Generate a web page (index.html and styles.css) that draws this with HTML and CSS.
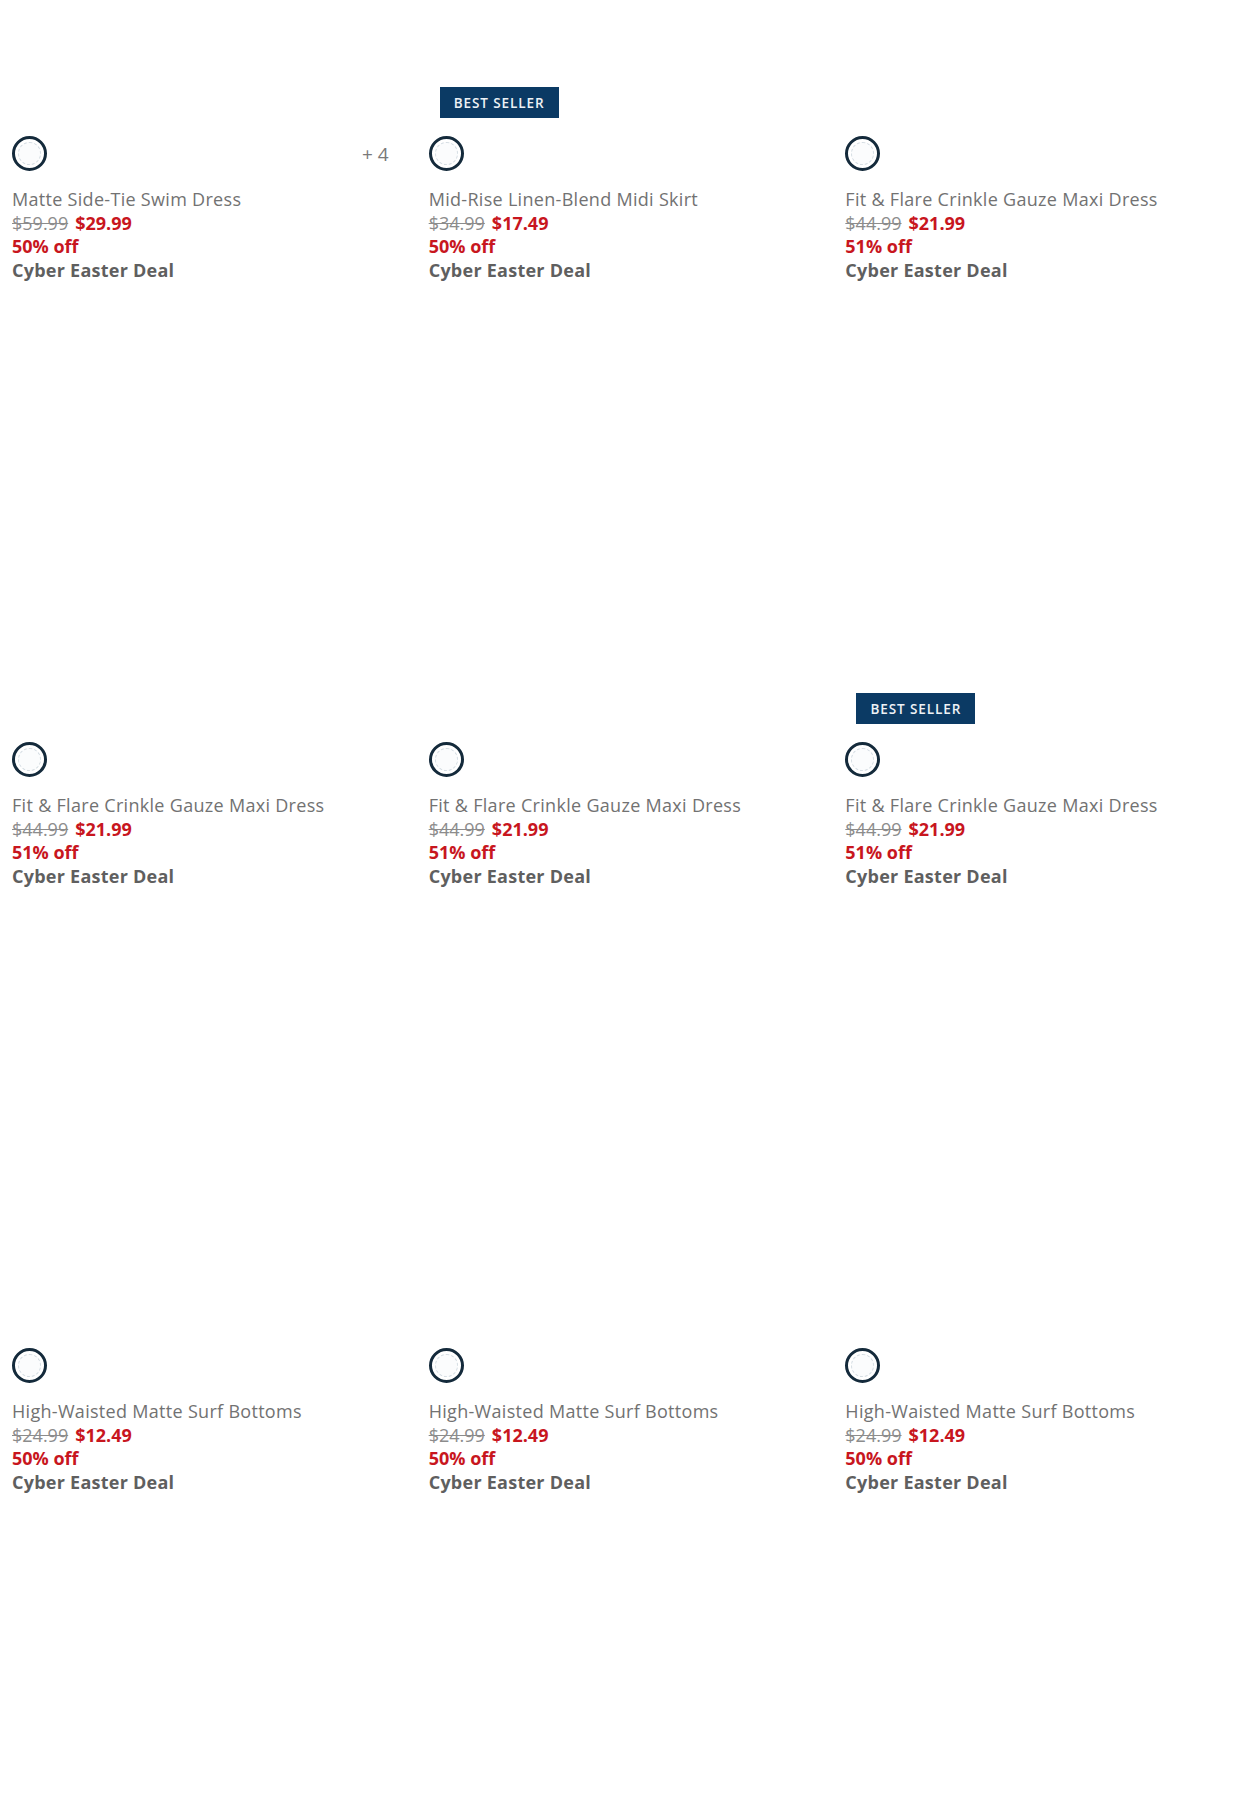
FILE: index.html
```html
<!DOCTYPE html>
<html lang="en">
<head>
<meta charset="utf-8">
<title>Products</title>
<link rel="stylesheet" href="styles.css">
</head>
<body>
<div class="grid">
  <div class="card">
    <div class="image"></div>
    <div class="swatches"><span class="swatch"></span><span class="more">+ 4</span></div>
    <div class="info">
      <div class="title">Matte Side-Tie Swim Dress</div>
      <div class="prices"><span class="was">$59.99</span><span class="now">$29.99</span></div>
      <div class="off">50% off</div>
      <div class="deal">Cyber Easter Deal</div>
    </div>
  </div>
  <div class="card">
    <div class="image"><span class="badge">BEST SELLER</span></div>
    <div class="swatches"><span class="swatch"></span></div>
    <div class="info">
      <div class="title">Mid-Rise Linen-Blend Midi Skirt</div>
      <div class="prices"><span class="was">$34.99</span><span class="now">$17.49</span></div>
      <div class="off">50% off</div>
      <div class="deal">Cyber Easter Deal</div>
    </div>
  </div>
  <div class="card">
    <div class="image"></div>
    <div class="swatches"><span class="swatch"></span></div>
    <div class="info">
      <div class="title">Fit &amp; Flare Crinkle Gauze Maxi Dress</div>
      <div class="prices"><span class="was">$44.99</span><span class="now">$21.99</span></div>
      <div class="off">51% off</div>
      <div class="deal">Cyber Easter Deal</div>
    </div>
  </div>
  <div class="card">
    <div class="image"></div>
    <div class="swatches"><span class="swatch"></span></div>
    <div class="info">
      <div class="title">Fit &amp; Flare Crinkle Gauze Maxi Dress</div>
      <div class="prices"><span class="was">$44.99</span><span class="now">$21.99</span></div>
      <div class="off">51% off</div>
      <div class="deal">Cyber Easter Deal</div>
    </div>
  </div>
  <div class="card">
    <div class="image"></div>
    <div class="swatches"><span class="swatch"></span></div>
    <div class="info">
      <div class="title">Fit &amp; Flare Crinkle Gauze Maxi Dress</div>
      <div class="prices"><span class="was">$44.99</span><span class="now">$21.99</span></div>
      <div class="off">51% off</div>
      <div class="deal">Cyber Easter Deal</div>
    </div>
  </div>
  <div class="card">
    <div class="image"><span class="badge">BEST SELLER</span></div>
    <div class="swatches"><span class="swatch"></span></div>
    <div class="info">
      <div class="title">Fit &amp; Flare Crinkle Gauze Maxi Dress</div>
      <div class="prices"><span class="was">$44.99</span><span class="now">$21.99</span></div>
      <div class="off">51% off</div>
      <div class="deal">Cyber Easter Deal</div>
    </div>
  </div>
  <div class="card">
    <div class="image"></div>
    <div class="swatches"><span class="swatch"></span></div>
    <div class="info">
      <div class="title">High-Waisted Matte Surf Bottoms</div>
      <div class="prices"><span class="was">$24.99</span><span class="now">$12.49</span></div>
      <div class="off">50% off</div>
      <div class="deal">Cyber Easter Deal</div>
    </div>
  </div>
  <div class="card">
    <div class="image"></div>
    <div class="swatches"><span class="swatch"></span></div>
    <div class="info">
      <div class="title">High-Waisted Matte Surf Bottoms</div>
      <div class="prices"><span class="was">$24.99</span><span class="now">$12.49</span></div>
      <div class="off">50% off</div>
      <div class="deal">Cyber Easter Deal</div>
    </div>
  </div>
  <div class="card">
    <div class="image"></div>
    <div class="swatches"><span class="swatch"></span></div>
    <div class="info">
      <div class="title">High-Waisted Matte Surf Bottoms</div>
      <div class="prices"><span class="was">$24.99</span><span class="now">$12.49</span></div>
      <div class="off">50% off</div>
      <div class="deal">Cyber Easter Deal</div>
    </div>
  </div>
</div>
</body>
</html>
```
FILE: styles.css
```css
html, body {
  margin: 0;
  padding: 0;
  background: #ffffff;
}
body {
  font-family: "Open Sans", "Liberation Sans", sans-serif;
  color: #6f6f6f;
  overflow: hidden;
  height: 1818px;
}
.grid {
  display: grid;
  grid-template-columns: repeat(3, 1fr);
  margin-top: -304px;
}
.card {
  padding: 0 12px 20px 12px;
  display: flex;
  flex-direction: column;
}
.image {
  height: 422px;
  position: relative;
}
.badge {
  position: absolute;
  left: 11px;
  bottom: 0;
  height: 31px;
  width: 119px;
  background: #0b3a64;
  color: #eef2f6;
  font-size: 13.5px;
  font-weight: 600;
  letter-spacing: 0.9px;
  display: flex;
  align-items: center;
  justify-content: center;
}
.swatches {
  margin-top: 18px;
  height: 35px;
  display: flex;
  align-items: center;
  justify-content: space-between;
}
.swatch {
  width: 35px;
  height: 35px;
  box-sizing: border-box;
  border-radius: 50%;
  border: 3px solid #142a3b;
  position: relative;
  background: #fff;
}
.swatch::after {
  content: "";
  position: absolute;
  inset: 3px;
  border-radius: 50%;
  border: 1px dashed #d5dde3;
  background: #fbfcfd;
}
.more {
  font-size: 19px;
  color: #7a7a7a;
  margin-right: 16px;
}
.info {
  margin-top: 17px;
  font-size: 18px;
  line-height: 23.5px;
}
.title {
  color: #727272;
  letter-spacing: 0.3px;
}
.prices {
  display: flex;
  gap: 7px;
}
.was {
  color: #8c8c8c;
  text-decoration: line-through;
  letter-spacing: 0;
}
.now {
  color: #c8161e;
  font-weight: 700;
  letter-spacing: 0;
}
.off {
  color: #c8161e;
  font-weight: 700;
  letter-spacing: 0;
}
.deal {
  color: #5f5f5f;
  font-weight: 700;
  letter-spacing: 0.25px;
}
```
